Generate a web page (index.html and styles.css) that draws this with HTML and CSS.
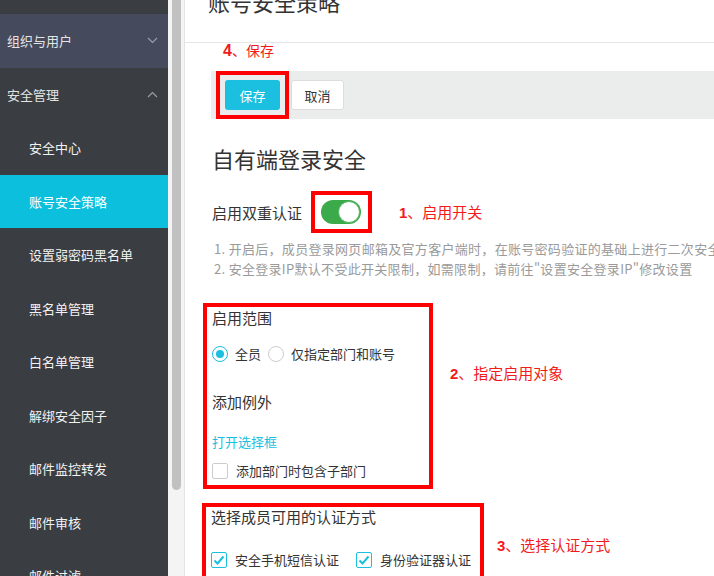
FILE: index.html
```html
<!DOCTYPE html>
<html lang="zh-CN">
<head>
    <meta charset="UTF-8">
    <meta name="viewport" content="width=device-width, initial-scale=1.0">
    <title>账号安全策略</title>
    <link rel="stylesheet" href="styles.css">
</head>
<body>
    <div class="layout">
        <aside class="sidebar">
            <div class="nav-top"></div>
            <div class="nav-group nav-group-hover">
                <span>组织与用户</span>
                <svg class="chevron" width="11" height="7" viewBox="0 0 11 7"><polyline points="1,1 5.5,5.5 10,1" /></svg>
            </div>
            <div class="nav-group">
                <span>安全管理</span>
                <svg class="chevron" width="11" height="7" viewBox="0 0 11 7"><polyline points="1,6 5.5,1.5 10,6" /></svg>
            </div>
            <ul class="nav-sub">
                <li>安全中心</li>
                <li class="active">账号安全策略</li>
                <li>设置弱密码黑名单</li>
                <li>黑名单管理</li>
                <li>白名单管理</li>
                <li>解绑安全因子</li>
                <li>邮件监控转发</li>
                <li>邮件审核</li>
                <li>邮件过滤</li>
            </ul>
        </aside>
        <div class="scrollbar"><div class="scroll-thumb"></div></div>

        <main class="main">
            <header class="page-header">
                <h1>账号安全策略</h1>
            </header>

            <div class="content">
                <div class="mark mark-save"><b>4</b>、保存</div>
                <div class="toolbar">
                    <div class="hl hl-save">
                        <button class="btn btn-primary">保存</button>
                    </div>
                    <button class="btn btn-default">取消</button>
                </div>

                <h2>自有端登录安全</h2>

                <div class="switch-row">
                    <span class="field-label">启用双重认证</span>
                    <div class="hl hl-switch">
                        <span class="switch on"><span class="knob"></span></span>
                    </div>
                    <span class="mark mark-switch"><b>1</b>、启用开关</span>
                </div>

                <p class="tips">
                    1. 开启后，成员登录网页邮箱及官方客户端时，在账号密码验证的基础上进行二次安全验证<br>
                    2. 安全登录IP默认不受此开关限制，如需限制，请前往"设置安全登录IP"修改设置
                </p>

                <div class="note-row">
                    <div class="hl-box box-scope">
                        <div class="sub-title">启用范围</div>
                        <div class="radio-row">
                            <span class="radio checked"></span><span>全员</span>
                            <span class="radio"></span><span>仅指定部门和账号</span>
                        </div>
                        <div class="sub-title exception">添加例外</div>
                        <a class="link">打开选择框</a>
                        <div class="check-row">
                            <span class="checkbox"></span><span>添加部门时包含子部门</span>
                        </div>
                    </div>
                    <span class="mark mark-scope"><b>2</b>、指定启用对象</span>
                </div>

                <div class="note-row">
                    <div class="hl-box box-method">
                        <div class="sub-title">选择成员可用的认证方式</div>
                        <div class="check-row methods">
                            <span class="checkbox checked">
                                <svg width="14" height="14" viewBox="0 0 14 14"><polyline points="2.5,7.5 5.5,10.5 11.5,3.5" /></svg>
                            </span><span>安全手机短信认证</span>
                            <span class="checkbox checked second">
                                <svg width="14" height="14" viewBox="0 0 14 14"><polyline points="2.5,7.5 5.5,10.5 11.5,3.5" /></svg>
                            </span><span>身份验证器认证</span>
                        </div>
                    </div>
                    <span class="mark mark-method"><b>3</b>、选择认证方式</span>
                </div>
            </div>
        </main>
    </div>
</body>
</html>
```

FILE: styles.css
```css
* {
    margin: 0;
    padding: 0;
    box-sizing: border-box;
}

body {
    font-family: "Noto Sans CJK SC", "Liberation Sans", sans-serif;
    background: #fff;
    color: #333;
    height: 576px;
    overflow: hidden;
}

.layout {
    display: flex;
    height: 576px;
}

/* sidebar */
.sidebar {
    width: 168px;
    flex-shrink: 0;
    background: #3a3e43;
    color: #eee;
    overflow: hidden;
}

.nav-top {
    height: 14px;
}

.nav-group {
    height: 53.5px;
    display: flex;
    align-items: center;
    justify-content: space-between;
    padding: 0 10px 0 7px;
    font-size: 13px;
    color: #e4e4e4;
}

.nav-group-hover {
    background: #454a5c;
}

.chevron polyline {
    fill: none;
    stroke: #9a9ea8;
    stroke-width: 1.2;
}

.nav-sub {
    list-style: none;
}

.nav-sub li {
    height: 53.5px;
    line-height: 53.5px;
    padding-left: 29px;
    font-size: 13px;
    color: #f2f2f2;
}

.nav-sub li.active {
    background: #0bbfdd;
    color: #fff;
}

.scrollbar {
    width: 17px;
    flex-shrink: 0;
    background: #f4f4f4;
    border-right: 1px solid #e4e4e4;
    padding: 0 3px 0 4px;
}

.scroll-thumb {
    height: 500px;
    margin-top: -10px;
    background: #c1c1c1;
    border-radius: 5px;
}

/* main */
.main {
    flex: 1;
    min-width: 0;
    overflow: hidden;
}

.page-header {
    display: flow-root;
    height: 43px;
    border-bottom: 1px solid #e6e6e6;
    padding-left: 23px;
}

.page-header h1 {
    font-size: 22px;
    font-weight: normal;
    line-height: 22px;
    margin-top: -10px;
    color: #333;
    white-space: nowrap;
}

.content {
    padding-left: 26px;
}

.mark {
    color: #f21b1b;
    font-size: 15px;
    line-height: 20px;
    white-space: nowrap;
}

.mark b {
    font-family: "Liberation Sans", sans-serif;
    font-weight: bold;
}

.mark-save {
    font-size: 14px;
    line-height: 16px;
    margin-top: -1px;
    padding-left: 12px;
}

.mark-save b {
    font-size: 16px;
}

.toolbar {
    margin-top: 12px;
    height: 48px;
    background: #ebecec;
    display: flex;
    align-items: center;
    padding-left: 5px;
}

.hl {
    border: 4px solid #f00;
}

.hl-save {
    padding: 5px;
}

.btn {
    height: 30px;
    font-family: inherit;
    font-size: 13px;
    border-radius: 3px;
    cursor: pointer;
}

.btn-primary {
    width: 55px;
    background: #1bbfdf;
    border: none;
    color: #fff;
}

.btn-default {
    width: 53px;
    margin-left: 2px;
    background: #fff;
    border: 1px solid #dcdcdc;
    color: #333;
}

h2 {
    font-size: 22px;
    font-weight: normal;
    line-height: 30px;
    margin-top: 24px;
    padding-left: 1px;
    color: #333;
}

.switch-row {
    margin-top: 18px;
    display: flex;
    align-items: center;
}

.field-label {
    font-size: 15px;
    padding-left: 1px;
    margin-right: 9px;
    color: #333;
}

.hl-switch {
    padding: 5px 7px 5px 6px;
}

.switch {
    display: block;
    width: 40px;
    height: 24px;
    border-radius: 12px;
    background: #3aaa4a;
    position: relative;
}

.switch .knob {
    position: absolute;
    right: 1px;
    top: 1px;
    width: 22px;
    height: 22px;
    border-radius: 50%;
    background: #fff;
    border: 1px solid #57b865;
}

.mark-switch {
    margin-left: 27px;
}

.tips {
    margin-top: 6px;
    padding-left: 3px;
    font-size: 13px;
    line-height: 20px;
    letter-spacing: 0.3px;
    color: #9a9a9a;
    white-space: nowrap;
}

.note-row {
    display: flex;
    align-items: flex-start;
}

.hl-box {
    border: 4px solid #f00;
    padding-left: 5px;
    font-size: 13px;
    color: #333;
}

.box-scope {
    margin-top: 24px;
    margin-left: -8px;
    width: 230px;
    padding-bottom: 4px;
}

.sub-title {
    font-size: 15px;
    line-height: 22px;
}

.radio-row,
.check-row {
    display: flex;
    align-items: center;
    line-height: 20px;
}

.radio-row {
    margin-top: 15px;
}

.radio {
    width: 16px;
    height: 16px;
    border-radius: 50%;
    border: 1px solid #ccc;
    background: #fff;
    margin-right: 7px;
    position: relative;
}

.radio + span {
    margin-right: 7px;
}

.radio.checked {
    border-color: #1bbfdf;
}

.radio.checked::after {
    content: "";
    position: absolute;
    left: 3px;
    top: 3px;
    width: 8px;
    height: 8px;
    border-radius: 50%;
    background: #1bbfdf;
}

.exception {
    margin-top: 27px;
}

.link {
    display: block;
    margin-top: 19px;
    line-height: 20px;
    color: #1bbfdf;
    cursor: pointer;
}

.check-row {
    margin-top: 9px;
}

.checkbox {
    width: 16px;
    height: 16px;
    border: 1px solid #ccc;
    border-radius: 2px;
    background: #fff;
    margin-right: 8px;
    display: flex;
    align-items: center;
    justify-content: center;
}

.checkbox.checked {
    border-color: #1bbfdf;
}

.checkbox svg polyline {
    fill: none;
    stroke: #1bbfdf;
    stroke-width: 2;
}

.checkbox.second {
    margin-left: 17px;
}

.mark-scope {
    margin-left: 17px;
    margin-top: 84px;
}

.box-method {
    margin-top: 14px;
    margin-left: -9px;
    width: 282px;
    height: 90px;
    border-bottom: none;
    padding-top: 1px;
}

.box-method .sub-title {
    line-height: 18px;
}

.methods {
    margin-top: 24px;
}

.mark-method {
    margin-left: 13px;
    margin-top: 46px;
}
```
